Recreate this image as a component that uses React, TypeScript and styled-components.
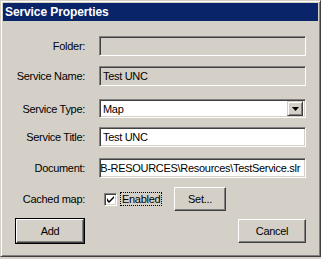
import React from "react";
import styled, { createGlobalStyle } from "styled-components";

const Global = createGlobalStyle`
  html, body { margin: 0; padding: 0; background: #d4d0c8; }
  body { font-family: "Liberation Sans", Arial, sans-serif; font-size: 11px; letter-spacing: -0.3px; color: #000; }
`;

const Window = styled.div`
  width: 321px;
  height: 257px;
  box-sizing: border-box;
  background: #d4d0c8;
  border-top: 1px solid #d4d0c8;
  border-left: 1px solid #d4d0c8;
  border-right: 1px solid #404040;
  border-bottom: 1px solid #404040;
  box-shadow: inset 1px 1px #ffffff, inset -1px -1px #808080;
  padding: 2px;
  display: flex;
  flex-direction: column;
`;

const TitleBar = styled.div`
  height: 18px;
  background: #0a246a;
  color: #fff;
  font-weight: bold;
  font-size: 12px;
  letter-spacing: -0.1px;
  display: flex;
  align-items: center;
  padding-left: 2px;
`;

const Body = styled.div`
  display: flex;
  flex-direction: column;
  padding-top: 15px;
`;

const Row = styled.div<{ $h: number; $mt: number }>`
  display: flex;
  align-items: center;
  height: ${(p) => p.$h}px;
  margin-top: ${(p) => p.$mt}px;
`;

const Label = styled.div`
  width: 82px;
  text-align: right;
  margin-right: 14px;
  white-space: nowrap;
`;

const Field = styled.div<{ $disabled?: boolean; $right?: boolean }>`
  width: 207px;
  height: 100%;
  box-sizing: border-box;
  background: ${(p) => (p.$disabled ? "#d4d0c8" : "#fff")};
  border-top: 1px solid #808080;
  border-left: 1px solid #808080;
  border-right: 1px solid #fff;
  border-bottom: 1px solid #fff;
  box-shadow: inset 1px 1px #404040, inset -1px -1px #d4d0c8;
  display: flex;
  align-items: center;
  justify-content: ${(p) => (p.$right ? "flex-end" : "flex-start")};
  overflow: hidden;
  white-space: nowrap;
  padding: 0 5px 0 3px;
`;

const Select = styled(Field)`
  padding-right: 2px;
  justify-content: space-between;
`;

const DropButton = styled.div`
  width: 16px;
  height: 15px;
  box-sizing: border-box;
  background: #d4d0c8;
  border-top: 1px solid #d4d0c8;
  border-left: 1px solid #d4d0c8;
  border-right: 1px solid #404040;
  border-bottom: 1px solid #404040;
  box-shadow: inset 1px 1px #fff, inset -1px -1px #808080;
  display: flex;
  align-items: center;
  justify-content: center;
`;

const CheckArea = styled.div`
  width: 74px;
  display: flex;
  align-items: center;
  padding-left: 5px;
  box-sizing: border-box;
`;

const CheckBox = styled.div`
  width: 13px;
  height: 13px;
  box-sizing: border-box;
  background: #fff;
  border-top: 1px solid #808080;
  border-left: 1px solid #808080;
  border-right: 1px solid #fff;
  border-bottom: 1px solid #fff;
  box-shadow: inset 1px 1px #404040, inset -1px -1px #d4d0c8;
  display: flex;
  align-items: center;
  justify-content: center;
  margin-right: 4px;
`;

const Focus = styled.span`
  outline: 1px dotted #000;
  padding: 0 1px;
`;

const Button = styled.div<{ $w: number; $default?: boolean }>`
  width: ${(p) => p.$w}px;
  height: 26px;
  box-sizing: border-box;
  background: #d4d0c8;
  border: 1px solid ${(p) => (p.$default ? "#000" : "transparent")};
  display: flex;
  align-items: stretch;
`;

const ButtonFace = styled.div`
  flex: 1;
  box-sizing: border-box;
  border-top: 1px solid #fff;
  border-left: 1px solid #fff;
  border-right: 1px solid #404040;
  border-bottom: 1px solid #404040;
  box-shadow: inset -1px -1px #808080;
  display: flex;
  align-items: center;
  justify-content: center;
`;

const Footer = styled.div`
  display: flex;
  justify-content: space-between;
  padding: 0 11px 0 12px;
  margin-top: 6px;
`;

export default function App() {
  return (
    <>
      <Global />
      <Window>
        <TitleBar>Service Properties</TitleBar>
        <Body>
          <Row $h={20} $mt={0}>
            <Label>Folder:</Label>
            <Field $disabled />
          </Row>
          <Row $h={20} $mt={10}>
            <Label>Service Name:</Label>
            <Field $disabled>Test UNC</Field>
          </Row>
          <Row $h={19} $mt={13}>
            <Label>Service Type:</Label>
            <Select>
              <span>Map</span>
              <DropButton>
                <svg width="7" height="4" viewBox="0 0 7 4">
                  <path d="M0 0h7L3.5 4z" fill="#000" />
                </svg>
              </DropButton>
            </Select>
          </Row>
          <Row $h={20} $mt={9}>
            <Label>Service Title:</Label>
            <Field>Test UNC</Field>
          </Row>
          <Row $h={20} $mt={11}>
            <Label>Document:</Label>
            <Field $right>B-RESOURCES\Resources\TestService.slr</Field>
          </Row>
          <Row $h={26} $mt={8}>
            <Label>Cached map:</Label>
            <CheckArea>
              <CheckBox>
                <svg width="7" height="7" viewBox="0 0 7 7">
                  <path d="M0 2v3l2 2 5-5v-2l-5 5z" fill="#000" />
                </svg>
              </CheckBox>
              <Focus>Enabled</Focus>
            </CheckArea>
            <Button $w={54}>
              <ButtonFace>Set...</ButtonFace>
            </Button>
          </Row>
          <Footer>
            <Button $w={70} $default>
              <ButtonFace>Add</ButtonFace>
            </Button>
            <Button $w={70}>
              <ButtonFace>Cancel</ButtonFace>
            </Button>
          </Footer>
        </Body>
      </Window>
    </>
  );
}
